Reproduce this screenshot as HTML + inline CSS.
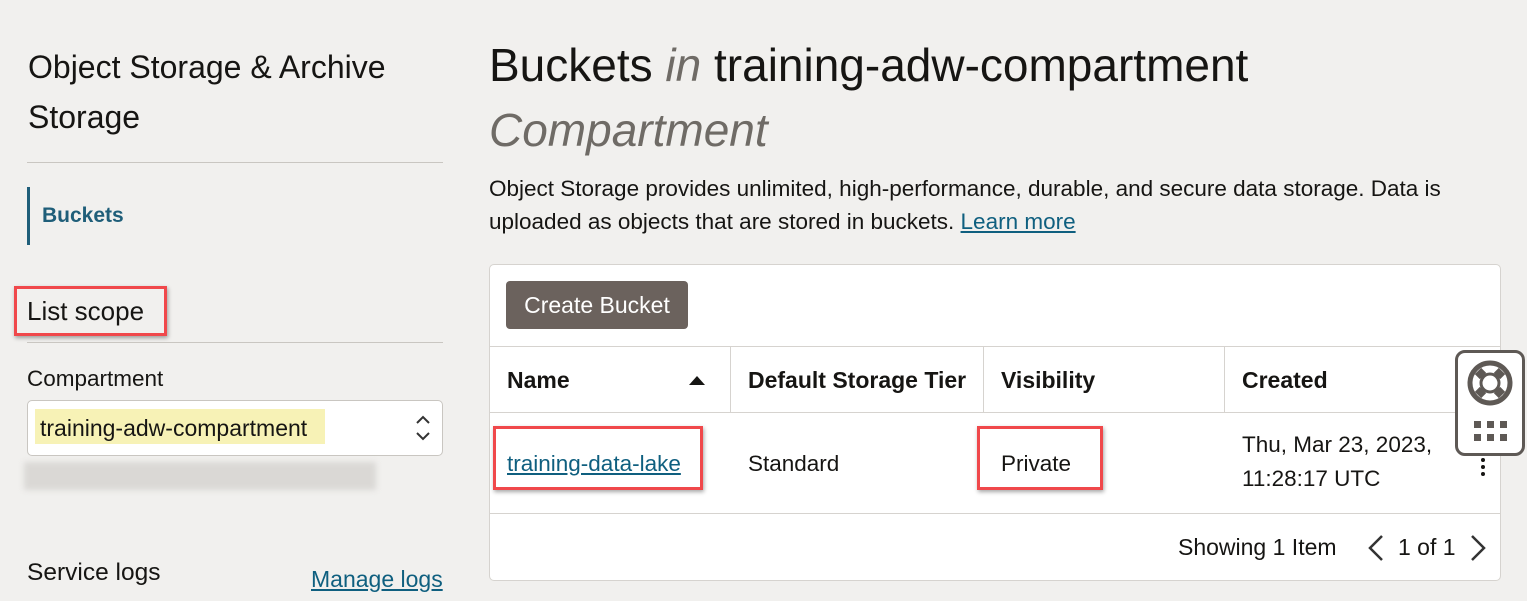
<!DOCTYPE html>
<html><head><style>
*{box-sizing:border-box}
body{margin:0;width:1527px;height:601px;overflow:hidden;background:#f1f0ee;font-family:"Liberation Sans",sans-serif;color:#161513;position:relative}
.a{position:absolute;white-space:nowrap}
.red{position:absolute;border:3px solid #f0484b;box-shadow:1px 2px 4px rgba(0,0,0,.35)}
a{color:#0f5f7f;text-decoration:underline}
</style></head><body>
<div class="a" style="left:28px;top:42px;font-size:32px;line-height:50px;white-space:normal;width:410px">Object Storage &amp; Archive Storage</div>
<div class="a" style="left:27px;top:162px;width:416px;height:1px;background:#c9c6c1"></div>
<div class="a" style="left:27px;top:187px;width:3px;height:58px;background:#1f5e79"></div>
<div class="a" style="left:42px;top:204px;font-size:21px;font-weight:bold;color:#1f5e79">Buckets</div>
<div class="a" style="left:27px;top:296px;font-size:26px">List scope</div>
<div class="red" style="left:14px;top:286px;width:153px;height:50px"></div>
<div class="a" style="left:27px;top:342px;width:416px;height:1px;background:#c9c6c1"></div>
<div class="a" style="left:27px;top:366px;font-size:22.5px">Compartment</div>
<div class="a" style="left:27px;top:400px;width:416px;height:56px;background:#fff;border:1px solid #c9c6c1;border-radius:5px"></div>
<div class="a" style="left:35px;top:409px;width:290px;height:35px;background:#f7f2b6"></div>
<div class="a" style="left:40px;top:415px;font-size:23px">training-adw-compartment</div>
<svg class="a" style="left:413px;top:413px" width="20" height="30" viewBox="0 0 20 30"><path d="M4 10 L10 4 L16 10 M4 20 L10 26 L16 20" fill="none" stroke="#333" stroke-width="2"/></svg>
<div class="a" style="left:24px;top:462px;width:352px;height:28px;background:#dad8d5;filter:blur(3px)"></div>
<div class="a" style="left:27px;top:559px;font-size:24.5px">Service logs</div>
<div class="a" style="left:311px;top:566px;font-size:23px"><a>Manage logs</a></div>

<div class="a" style="left:489px;top:38px;font-size:46px">Buckets <i style="color:#6f6b66">in</i> training-adw-compartment</div>
<div class="a" style="left:489px;top:103px;font-size:46px;font-style:italic;color:#6f6b66">Compartment</div>
<div class="a" style="left:489px;top:172px;font-size:22.5px;line-height:33px;width:1010px;white-space:normal">Object Storage provides unlimited, high-performance, durable, and secure data storage. Data is uploaded as objects that are stored in buckets. <a>Learn more</a></div>
<div class="a" style="left:489px;top:264px;width:1012px;height:317px;background:#fff;border:1px solid #d6d3cf;border-radius:5px"></div>
<div class="a" style="left:506px;top:281px;width:182px;height:48px;background:#6b625d;border-radius:4px;color:#fff;font-size:23px;line-height:48px;text-align:center">Create Bucket</div>
<div class="a" style="left:490px;top:346px;width:1010px;height:1px;background:#d6d3cf"></div>
<div class="a" style="left:490px;top:412px;width:1010px;height:1px;background:#d6d3cf"></div>
<div class="a" style="left:490px;top:513px;width:1010px;height:1px;background:#d6d3cf"></div>
<div class="a" style="left:730px;top:346px;width:1px;height:66px;background:#d6d3cf"></div>
<div class="a" style="left:983px;top:346px;width:1px;height:66px;background:#d6d3cf"></div>
<div class="a" style="left:1224px;top:346px;width:1px;height:66px;background:#d6d3cf"></div>
<div class="a" style="left:507px;top:367px;font-size:23px;font-weight:bold">Name</div>
<div class="a" style="left:689px;top:376px;width:0;height:0;border-left:8px solid transparent;border-right:8px solid transparent;border-bottom:9px solid #161513"></div>
<div class="a" style="left:748px;top:367px;font-size:23px;font-weight:bold">Default Storage Tier</div>
<div class="a" style="left:1001px;top:367px;font-size:23px;font-weight:bold">Visibility</div>
<div class="a" style="left:1242px;top:367px;font-size:23px;font-weight:bold">Created</div>
<div class="a" style="left:507px;top:451px;font-size:22.5px"><a>training-data-lake</a></div>
<div class="red" style="left:493px;top:426px;width:210px;height:64px"></div>
<div class="a" style="left:748px;top:451px;font-size:22.5px">Standard</div>
<div class="a" style="left:1001px;top:451px;font-size:22.5px">Private</div>
<div class="red" style="left:977px;top:426px;width:126px;height:64px"></div>
<div class="a" style="left:1242px;top:428px;font-size:22.5px;line-height:34px">Thu, Mar 23, 2023,<br>11:28:17 UTC</div>
<svg class="a" style="left:1478px;top:456px" width="10" height="22"><circle cx="5" cy="4" r="2" fill="#161513"/><circle cx="5" cy="11" r="2" fill="#161513"/><circle cx="5" cy="18" r="2" fill="#161513"/></svg>
<div class="a" style="left:1178px;top:534px;font-size:23px">Showing 1 Item</div>
<svg class="a" style="left:1366px;top:534px" width="20" height="28"><path d="M16 2 L4 14 L16 26" fill="none" stroke="#333" stroke-width="2.5"/></svg>
<div class="a" style="left:1398px;top:534px;font-size:23px">1 of 1</div>
<svg class="a" style="left:1468px;top:534px" width="20" height="28"><path d="M4 2 L16 14 L4 26" fill="none" stroke="#333" stroke-width="2.5"/></svg>
<div class="a" style="left:1455px;top:350px;width:70px;height:106px;background:#fff;border:3px solid #5e5955;border-radius:10px">
<svg width="64" height="100" viewBox="0 0 64 100"><circle cx="32" cy="30" r="20" fill="none" stroke="#5e5955" stroke-width="5"/><circle cx="32" cy="30" r="9" fill="none" stroke="#5e5955" stroke-width="3"/><g stroke="#5e5955" stroke-width="9"><line x1="20" y1="18" x2="25" y2="23"/><line x1="44" y1="18" x2="39" y2="23"/><line x1="20" y1="42" x2="25" y2="37"/><line x1="44" y1="42" x2="39" y2="37"/></g><g fill="#5e5955"><rect x="16" y="68" width="7" height="7"/><rect x="29" y="68" width="7" height="7"/><rect x="42" y="68" width="7" height="7"/><rect x="16" y="81" width="7" height="7"/><rect x="29" y="81" width="7" height="7"/><rect x="42" y="81" width="7" height="7"/></g></svg>
</div>
</body></html>
